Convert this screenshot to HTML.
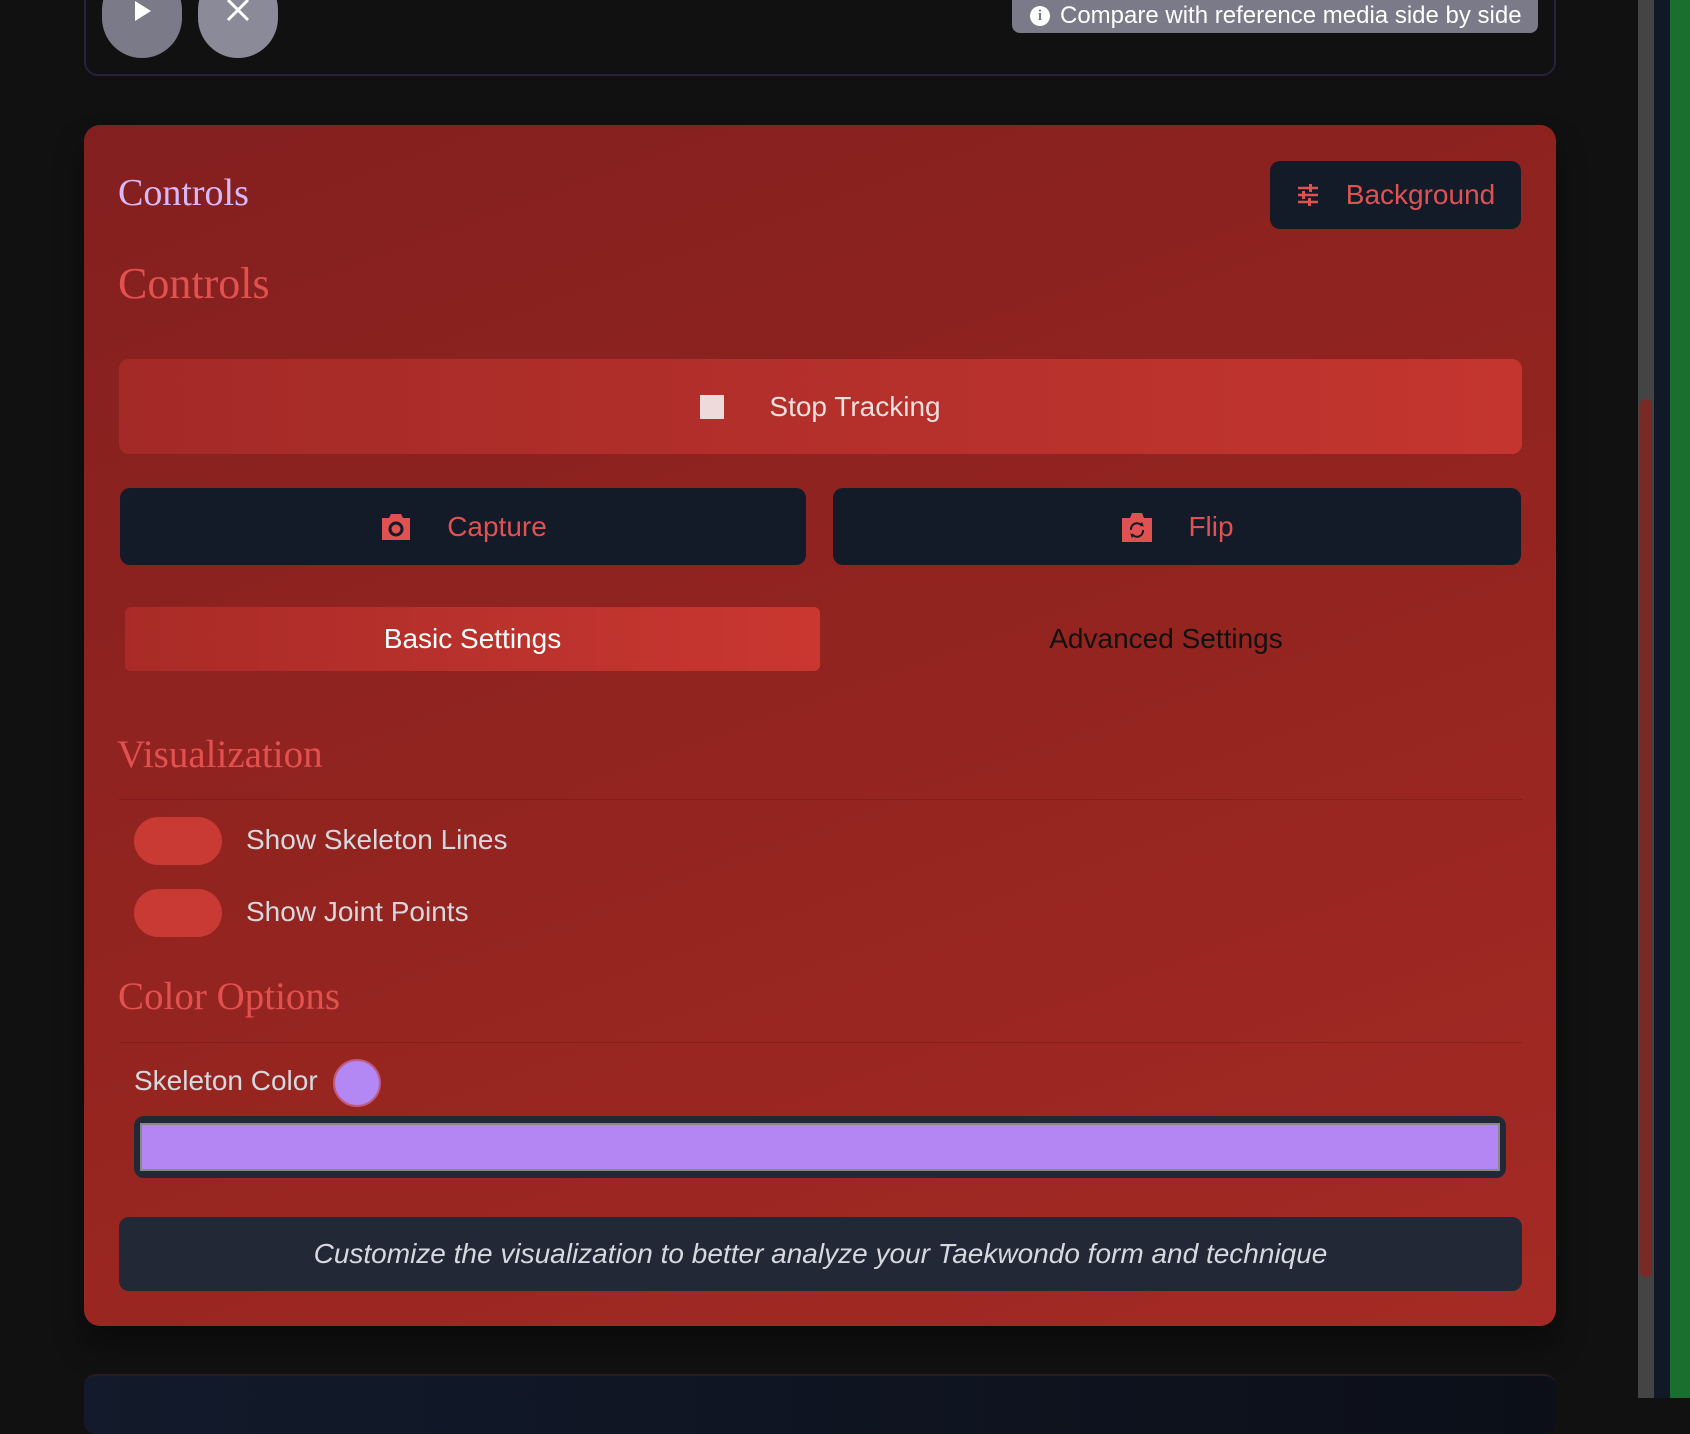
<!DOCTYPE html>
<html><head><style>
*{box-sizing:border-box;margin:0;padding:0}
body{width:1690px;height:1398px;background:#111;position:relative;overflow:hidden;font-family:"Liberation Sans",sans-serif}
.abs{position:absolute}
.sans{font-family:"Liberation Sans",sans-serif}
.serif{font-family:"Liberation Serif",serif}
.btn{display:flex;align-items:center;justify-content:center;white-space:nowrap}
</style></head><body>
<div class="abs" style="left:1638px;top:0;width:16px;height:1398px;background:#444"></div>
<div class="abs" style="left:1640px;top:399px;width:12px;height:878px;background:#7a2a26;border-radius:6px"></div>
<div class="abs" style="left:1654px;top:0;width:16px;height:1398px;background:#111827"></div>
<div class="abs" style="left:1670px;top:0;width:20px;height:1398px;background:#1a6e2e"></div>

<div class="abs" style="left:84px;top:-30px;width:1472px;height:106px;border:2px solid #2a2040;border-radius:14px;background:#111"></div>
<div class="abs btn" style="left:102px;top:-30px;width:80px;height:88px;border-radius:40px;background:#7a7a88;align-items:flex-start"><svg width="26" height="26" viewBox="0 0 26 26" style="margin-top:28px"><path d="M6 3L22 13L6 23Z" fill="#fff"/></svg></div>
<div class="abs btn" style="left:198px;top:-30px;width:80px;height:88px;border-radius:40px;background:#8a8a98;align-items:flex-start"><svg width="28" height="28" viewBox="0 0 28 28" style="margin-top:26px"><path d="M4 4L24 24M24 4L4 24" stroke="#fff" stroke-width="3"/></svg></div>
<div class="abs" style="left:1012px;top:-10px;width:526px;height:43px;background:#7b7a88;border-radius:0 0 8px 8px;color:#fff;font-size:24px;display:flex;align-items:center;padding-left:18px;padding-top:8px;white-space:nowrap">
<span style="display:inline-block;width:20px;height:20px;border-radius:50%;background:#fff;color:#7b7a88;font-size:15px;font-weight:bold;text-align:center;line-height:20px;margin-right:10px;font-family:'Liberation Serif',serif">i</span>Compare with reference media side by side</div>

<div class="abs" style="left:84px;top:125px;width:1472px;height:1201px;border-radius:16px;background:linear-gradient(160deg,#83201f 0%,#93241f 50%,#a52a25 100%);box-shadow:0 20px 30px rgba(0,0,0,.4)"></div>

<div class="abs serif" style="left:118px;top:171px;font-size:38px;color:#d9b8f8">Controls</div>
<div class="abs btn sans" style="left:1270px;top:161px;width:251px;height:68px;background:#131a28;border-radius:10px;color:#e05252;font-size:27px;font-weight:bold">
<svg width="24" height="24" viewBox="0 0 24 24" style="margin-right:26px"><g stroke="#e05252" stroke-width="2.5" fill="none"><path d="M2 5H22M2 12H22M2 19H22"/></g><g fill="#e05252"><rect x="13" y="1" width="3" height="8"/><rect x="6" y="8" width="3" height="8"/><rect x="12" y="15" width="3" height="8"/></g></svg><span style="font-weight:normal;font-size:28px">Background</span></div>
<div class="abs serif" style="left:118px;top:258px;font-size:44px;color:#e35050">Controls</div>

<div class="abs btn sans" style="left:119px;top:359px;width:1403px;height:95px;border-radius:10px;background:linear-gradient(90deg,#a42a27,#c4352f);color:#f1e0e0;font-size:28px">
<span style="width:24px;height:24px;background:#eedada;margin-right:45px"></span>Stop Tracking</div>

<div class="abs btn sans" style="left:120px;top:488px;width:686px;height:77px;border-radius:10px;background:#131a28;color:#e05252;font-size:28px">
<svg width="34" height="30" viewBox="0 0 34 30" style="margin-right:34px"><path d="M3 6H10L12 2H22L24 6H31V28H3Z" fill="#e05252"/><circle cx="17" cy="17" r="6" fill="none" stroke="#131a28" stroke-width="3"/></svg>Capture</div>
<div class="abs btn sans" style="left:833px;top:488px;width:688px;height:77px;border-radius:10px;background:#131a28;color:#e05252;font-size:28px">
<svg width="34" height="32" viewBox="0 0 34 32" style="margin-right:34px"><path d="M2 7H10L12 2H22L24 7H32V31H2Z" fill="#e05252"/><path d="M11 19A6 6 0 0 1 22 15M23 19A6 6 0 0 1 12 23" fill="none" stroke="#131a28" stroke-width="2"/><path d="M20 13L24 16L22 11Z M14 25L10 22L12 27Z" fill="#131a28"/></svg>Flip</div>

<div class="abs btn sans" style="left:125px;top:607px;width:695px;height:64px;border-radius:6px;background:linear-gradient(90deg,#a92b27,#ca3731);color:#fff;font-size:28px">Basic Settings</div>
<div class="abs btn sans" style="left:833px;top:607px;width:666px;height:64px;color:#111;font-size:28px">Advanced Settings</div>

<div class="abs serif" style="left:117px;top:732px;font-size:39px;color:#e35050">Visualization</div>
<div class="abs" style="left:119px;top:799px;width:1403px;height:1px;background:rgba(0,0,0,.15)"></div>
<div class="abs" style="left:134px;top:817px;width:88px;height:48px;border-radius:24px;background:#c83a33"></div>
<div class="abs sans" style="left:246px;top:824px;font-size:28px;color:#d6d8de">Show Skeleton Lines</div>
<div class="abs" style="left:134px;top:889px;width:88px;height:48px;border-radius:24px;background:#c83a33"></div>
<div class="abs sans" style="left:246px;top:896px;font-size:28px;color:#d6d8de">Show Joint Points</div>

<div class="abs serif" style="left:118px;top:974px;font-size:39px;color:#e35050">Color Options</div>
<div class="abs" style="left:119px;top:1042px;width:1403px;height:1px;background:rgba(0,0,0,.15)"></div>
<div class="abs sans" style="left:134px;top:1065px;font-size:28px;color:#d6d8de">Skeleton Color</div>
<div class="abs" style="left:333px;top:1059px;width:48px;height:48px;border-radius:50%;background:#b388f5;border:2px solid #c05a80"></div>
<div class="abs" style="left:134px;top:1116px;width:1372px;height:62px;border-radius:10px;background:#222836;padding:7px 6px"><div style="width:100%;height:100%;background:#b386f4;border:2px solid #888"></div></div>

<div class="abs btn sans" style="left:119px;top:1217px;width:1403px;height:74px;border-radius:10px;background:#222836;color:#d6d8de;font-size:28px;font-style:italic">Customize the visualization to better analyze your Taekwondo form and technique</div>

<div class="abs" style="left:84px;top:1374px;width:1472px;height:60px;border-radius:12px;background:linear-gradient(90deg,#121a2b,#0c0f18);border-top:2px solid #2a1a28"></div>
</body></html>
